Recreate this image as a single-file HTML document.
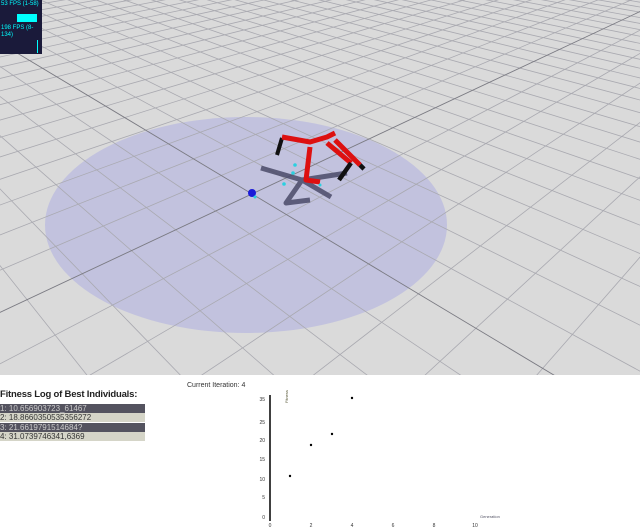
<!DOCTYPE html>
<html><head><meta charset="utf-8"><style>
html,body{margin:0;width:640px;height:528px;overflow:hidden;background:#fff;font-family:"Liberation Sans",sans-serif}
#scene{position:absolute;left:0;top:0}
.fps{position:absolute;left:0;top:0;width:42px;height:54px;background:#1a1a3a;color:#0ff;font-size:6px;line-height:7px;overflow:hidden}
.row{position:absolute;left:0;width:145px;height:9px;font-size:8px;line-height:9px;white-space:nowrap;overflow:hidden}
.d{background:#54535f;color:#ccc}.l{background:#d5d5c8;color:#333}
</style></head><body>
<svg id="scene" width="640" height="375" viewBox="0 0 640 375">
<rect width="640" height="375" fill="#dadada"/>
<ellipse cx="246" cy="225" rx="201" ry="108" fill="#c2c2de"/>
<g id="grid" stroke="#a9a9b0" stroke-width="0.8"></g>
<g id="axes" stroke="#7a7a82" stroke-width="0.9"></g>
<g fill="none" stroke-linecap="butt" stroke-linejoin="round">
<path d="M261 168 L302 180 L286 203 L310 200 M302 180 L331 197 M302 180 L347 173" stroke="#4a4a68" stroke-width="5" opacity="0.85"/>
<path d="M282 138 L277 155" stroke="#111" stroke-width="4"/>
<path d="M282 137 L310 142 L327 137 L335 133 M310 147 L306 180 L320 182 M335 140 L360 165 M327 143 L351 163" stroke="#dd1010" stroke-width="5"/>
<path d="M351 163 L339 180 M360 165 L364 169" stroke="#111" stroke-width="4.5"/>
</g>
<circle cx="252" cy="193" r="4" fill="#1a1ad8"/>
<g fill="#2ad0e0"><circle cx="295" cy="165" r="1.8"/><circle cx="293" cy="173" r="1.8"/><circle cx="284" cy="184" r="1.8"/><circle cx="255" cy="197" r="1.5"/><circle cx="320" cy="185" r="1.5"/></g>
</svg>
<div class="fps"><div style="padding:1px 1px">53 FPS (1-58)</div><div style="position:absolute;left:17px;top:14px;width:20px;height:8px;background:#0ff"></div><div style="position:absolute;left:1px;top:25px">198 FPS (8-<br>134)</div><div style="position:absolute;left:37px;top:40px;width:1px;height:13px;background:#0ff"></div></div>
<div style="position:absolute;left:0;top:375px;width:640px;height:153px;background:#fff"></div>
<div style="position:absolute;left:0;top:389px;font-size:9.5px;font-weight:bold;color:#222;letter-spacing:-0.2px">Fitness Log of Best Individuals:</div>
<div class="row d" style="top:404px">1: 10.656903723_61467</div>
<div class="row l" style="top:413px">2: 18.8660350535356272</div>
<div class="row d" style="top:423px">3: 21.6619791514684?</div>
<div class="row l" style="top:432px">4: 31.0739746341,6369</div>
<div style="position:absolute;left:187px;top:382px;font-size:7px;color:#333">Current Iteration: 4</div>
<svg style="position:absolute;left:0;top:375px" width="640" height="153">
<g stroke="#000" stroke-width="1.5"><line x1="270" y1="20" x2="270" y2="146"/></g>
<g font-size="5" fill="#333" text-anchor="end">
<text x="265" y="26">35</text><text x="265" y="49">25</text><text x="265" y="67">20</text><text x="265" y="86">15</text><text x="265" y="106">10</text><text x="265" y="124">5</text><text x="265" y="144">0</text></g>
<g font-size="5" fill="#333" text-anchor="middle"><text x="270" y="152">0</text><text x="311" y="152">2</text><text x="352" y="152">4</text><text x="393" y="152">6</text><text x="434" y="152">8</text><text x="475" y="152">10</text></g>
<text x="480" y="143" font-size="4" fill="#556">Generation</text>
<text x="288" y="28" font-size="4" fill="#553" transform="rotate(-90 288 28)">Fitness</text>
<g fill="#000"><circle cx="290" cy="101" r="1.2"/><circle cx="311" cy="70" r="1.2"/><circle cx="332" cy="59" r="1.2"/><circle cx="352" cy="23" r="1.2"/></g>
</svg>
<script>
(function(){
var ns='http://www.w3.org/2000/svg';
var O=[252,194],V1=[-338,-160],V2=[1005,-160],a=0.055,b=0.046;
function P(u,v){var w=1+a*u+b*v;return [(a*u*V1[0]+b*v*V2[0]+O[0])/w,(a*u*V1[1]+b*v*V2[1]+O[1])/w];}
function L(g,p,q){var l=document.createElementNS(ns,'line');l.setAttribute('x1',p[0].toFixed(1));l.setAttribute('y1',p[1].toFixed(1));l.setAttribute('x2',q[0].toFixed(1));l.setAttribute('y2',q[1].toFixed(1));g.appendChild(l);}
var g=document.getElementById('grid'),ax=document.getElementById('axes');
for(var u=-40;u<=200;u++){var vmin=(0.03-1-a*u)/b;var p=P(u,vmin),q=P(u,3000);L(u==0?ax:g,p,q);}
for(var v=-40;v<=200;v++){var umin=(0.03-1-b*v)/a;var p=P(umin,v),q=P(3000,v);L(v==0?ax:g,p,q);}
})();
</script>
</body></html>
